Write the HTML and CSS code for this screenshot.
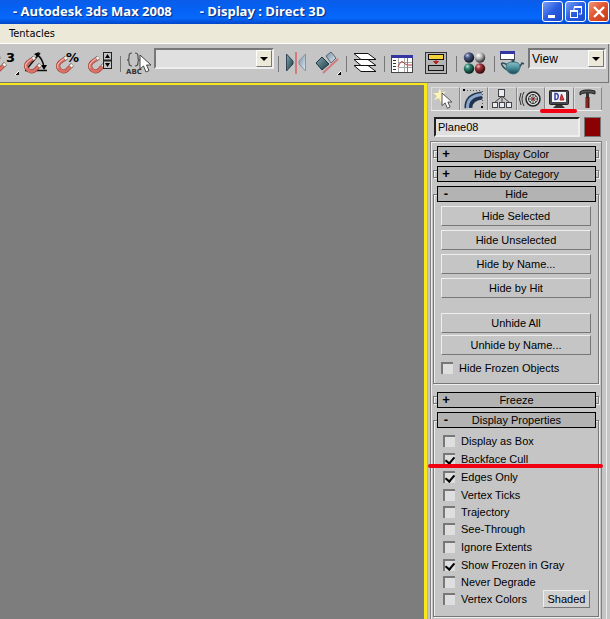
FILE: index.html
```html
<!DOCTYPE html>
<html lang="en">
<head>
<meta charset="utf-8">
<title>Autodesk 3ds Max 2008</title>
<link rel="stylesheet" href="styles.css">
</head>
<body>
<svg class="defs" aria-hidden="true">
  <defs>
    <linearGradient id="teal" x1="0" y1="0" x2="1" y2="1"><stop offset="0" stop-color="#86aab0"/><stop offset="1" stop-color="#173a44"/></linearGradient>
    <linearGradient id="ice" x1="0" y1="0" x2="1" y2="1"><stop offset="0" stop-color="#7890a4"/><stop offset="1" stop-color="#dfe9f1"/></linearGradient>
    <radialGradient id="ballBlue" cx=".35" cy=".3" r=".7"><stop offset="0" stop-color="#c3cce4"/><stop offset=".35" stop-color="#4b5a80"/><stop offset="1" stop-color="#10152c"/></radialGradient>
    <radialGradient id="ballGray" cx=".35" cy=".3" r=".7"><stop offset="0" stop-color="#fff"/><stop offset=".45" stop-color="#bbb"/><stop offset="1" stop-color="#333"/></radialGradient>
    <radialGradient id="ballGreen" cx=".35" cy=".3" r=".7"><stop offset="0" stop-color="#c0e8dc"/><stop offset=".35" stop-color="#2f8270"/><stop offset="1" stop-color="#06251e"/></radialGradient>
    <radialGradient id="ballRed" cx=".35" cy=".3" r=".7"><stop offset="0" stop-color="#f2c0c0"/><stop offset=".35" stop-color="#a03538"/><stop offset="1" stop-color="#350a0c"/></radialGradient>
    <linearGradient id="pot" x1="0" y1="0" x2="0" y2="1"><stop offset="0" stop-color="#8fc3cc"/><stop offset=".5" stop-color="#4a8d9b"/><stop offset="1" stop-color="#17444f"/></linearGradient>
    <g id="magnet" fill="none">
      <path d="M10 9 4 13Q0 17 4 21Q8 24 11 21L16 16" stroke="#8a3a34" stroke-width="4"/>
      <path d="M10 9 4 13Q0 17 4 21Q8 24 11 21L16 16" stroke="#dd7066" stroke-width="3"/>
      <path d="M9 9 4 12.500Q0 16 2 19" stroke="#f7c0b6" stroke-width="1"/>
      <path d="M8.500 10 11 8.300M14.300 17.700 16.500 15.500" stroke="#666" stroke-width="4"/>
      <path d="M8.700 9.900 10.800 8.400M14.500 17.500 16.300 15.700" stroke="#f8f4e6" stroke-width="3"/>
    </g>
    <path id="cursor" d="M0 0V14L3.500 11 6 17 9 15.500 6.500 10H11Z" fill="#fff" stroke="#444" stroke-width="1"/>
    <path id="down" d="M0 0H8L4 4Z"/>
  </defs>
</svg>

<header class="titlebar">
  <h1 class="title"><span>- Autodesk 3ds Max 2008</span><span>- Display : Direct 3D</span></h1>
  <div class="window-buttons">
    <button class="window-button" aria-label="Minimize"><svg width="20" height="20"><path d="M5 14.500H12" stroke="#fff" stroke-width="3"/></svg></button>
    <button class="window-button" aria-label="Restore"><svg width="20" height="20" fill="none" stroke="#fff"><path d="M8 8V5.500H15.500V12H13" /><path d="M8 5H16" stroke-width="2"/><rect x="4.500" y="9.500" width="7" height="6"/><path d="M4 9H12" stroke-width="2"/></svg></button>
    <button class="window-button close" aria-label="Close"><svg width="20" height="20"><path d="M5 5 15 15M15 5 5 15" stroke="#fff" stroke-width="2.400"/></svg></button>
  </div>
</header>

<nav class="menubar"><a class="menu-item" href="#">Tentacles</a></nav>

<div class="toolbar">
  <button class="tool first" aria-label="3D snap"><svg width="20" height="28"><use href="#magnet" x="-11" y="0"/><text x="6" y="14" class="glyph">3</text><path d="M19 23V27H15Z" fill="#111"/><path d="M19 23 15 27" stroke="#fff"/></svg></button>
  <button class="tool" aria-label="Angle snap"><svg width="28" height="28"><path d="M3 22.500H25M4 22 18 5" stroke="#111" stroke-width="1.500" fill="none"/><path d="M14 6Q21 10 22 20" fill="none" stroke="#111" stroke-width="1.500"/><path d="M12 6 17 4 16 9ZM19 17H25L22 22Z"/><use href="#magnet" x="2" y="1"/></svg></button>
  <button class="tool" aria-label="Percent snap"><svg width="28" height="28"><use href="#magnet" x="2" y="1"/><text x="12" y="14" class="glyph">%</text></svg></button>
  <button class="tool" aria-label="Spinner snap"><svg width="28" height="28"><use href="#magnet" x="2" y="1"/><rect x="17.500" y="4.500" width="8" height="16" fill="#c5c5c5" stroke="#222"/><path d="M17 12.500H26" stroke="#222" stroke-width="2"/><path d="M19 10 21.500 6 24 10ZM19 15 21.500 19 24 15Z"/></svg></button>
  <span class="divider"></span>
  <button class="tool slim" aria-label="Edit named selections"><svg width="28" height="28"><path d="M7 5Q4 5 4 8V10Q4 12 2 12Q4 12 4 14V15Q4 18 7 18M10 5Q13 5 13 8V10Q13 12 15 12Q13 12 13 14V15Q13 18 10 18" fill="none" stroke="#555" stroke-width="1.200"/><text x="1" y="26" class="tiny">ABC</text><use href="#cursor" x="15" y="7"/></svg></button>
  <span class="combo sets"><select aria-label="Named selection sets"><option></option></select><svg class="arrow" width="16" height="16"><use href="#down" x="3" y="6"/></svg></span>
  <span class="divider"></span>
  <button class="tool slim" aria-label="Mirror"><svg width="28" height="28"><path d="M3.500 6 10 13V16L3.500 23Z" fill="url(#teal)" stroke="#345"/><path d="M22.500 6 16 13V16L22.500 23Z" fill="url(#ice)" stroke="#8295a5"/><path d="M13 4V26" stroke="#d27b7e" stroke-width="2"/></svg></button>
  <button class="tool slim" aria-label="Align"><svg width="28" height="28"><path d="M3 15 9 9 16 16 9 22Z" fill="url(#teal)" stroke="#234"/><path d="M13 8 18 4 23 10 18 15Z" fill="url(#ice)" stroke="#567"/><path d="M10 25 25 11" stroke="#d27b7e" stroke-width="2"/><path d="M28 23V27H24Z"/><path d="M28 23 24 27" stroke="#fff"/></svg></button>
  <span class="divider"></span>
  <button class="tool slim" aria-label="Layer manager"><svg width="28" height="28" fill="#fff" stroke="#111" stroke-width="1"><path d="M3 17.500H17L25 23.500H10Z"/><path d="M3 11.500H17L25 17.500H10Z"/><path d="M3 5.500H17L25 11.500H10Z"/></svg></button>
  <span class="divider"></span>
  <button class="tool" aria-label="Curve editor"><svg width="28" height="28"><rect x="1.500" y="7.500" width="21" height="17" fill="#fff" stroke="#444"/><path d="M1 8.500H23" stroke="#3436a4" stroke-width="3"/><path d="M8.500 10V24M14.500 10V24M8 14.500H22M8 19.500H22" stroke="#aaa"/><path d="M3 12.500H6M3 15.500H6M3 18.500H6M3 21.500H6" stroke="#333"/><path d="M8 19Q11 12 13 14T17 17H22" fill="none" stroke="#b43b3b"/><path d="M17.500 10V24" stroke="#51a051"/></svg></button>
  <button class="tool" aria-label="Schematic view"><svg width="28" height="28"><rect x="3.500" y="4.500" width="21" height="21" fill="#b5b5b5" stroke="#333"/><rect x="6.500" y="6.500" width="15" height="5" fill="#f5d33b" stroke="#111"/><rect x="6.500" y="17.500" width="15" height="5" fill="#aaa" stroke="#111"/><path d="M14 12V14M11.500 13.500H16.500L14 16Z" stroke="#b22222" fill="#b22222"/></svg></button>
  <span class="divider"></span>
  <button class="tool slim" aria-label="Material editor"><svg width="28" height="28"><circle cx="8" cy="9.500" r="5.200" fill="url(#ballBlue)"/><circle cx="19" cy="9.500" r="5.200" fill="url(#ballGray)"/><circle cx="8" cy="20.500" r="5.200" fill="url(#ballGreen)"/><circle cx="19" cy="20.500" r="5.200" fill="url(#ballRed)"/></svg></button>
  <span class="divider"></span>
  <button class="tool slim" aria-label="Render scene"><svg width="28" height="28"><path d="M9 17Q1 13 3 17Q5 21 9 22M20 20 23 15 25 16" fill="none" stroke="#27525c" stroke-width="1.500"/><path d="M7 18Q8 14 14 14Q21 14 21 19Q20 26 14 26Q7 25 7 18Z" fill="url(#pot)" stroke="#3b7480"/><path d="M14 14V12" stroke="#27525c" stroke-width="3"/><rect x="1.500" y="3.500" width="14" height="8" fill="#fff" stroke="#445"/><path d="M1 4.500H16" stroke="#3436a4" stroke-width="3"/></svg></button>
  <span class="combo view"><select aria-label="Render type"><option>View</option></select><svg class="arrow" width="16" height="16"><use href="#down" x="3" y="6"/></svg></span>
</div>

<main class="workspace">
  <section class="viewport" aria-label="Viewport"></section>
  <aside class="panel">
    <div class="tabs">
      <button class="tab" aria-label="Create"><svg width="24" height="22"><path d="M7 0 8 5 13 3 9 8 14 10 9 11 8 15 6 10 1 12 4 8 0 5 5 5Z" fill="#fff4b8"/><g transform="translate(9 5) scale(.9)"><use href="#cursor"/></g></svg></button>
      <button class="tab" aria-label="Modify"><svg width="24" height="22" fill="none"><path d="M6.500 20Q6 9 20 7.500" stroke="#1f3350" stroke-width="8"/><path d="M5.500 20Q5 8 20 6.500" stroke="#8ba7ca" stroke-width="3"/><path d="M2 2.500H19M20.500 3V20" stroke="#555" stroke-dasharray="1 2"/><path d="M1 1H3V3H1ZM19 18H21V20H19Z" fill="#000"/></svg></button>
      <button class="tab" aria-label="Hierarchy"><svg width="24" height="22" fill="#e8edf5" stroke="#444"><path d="M12 8V15M11 9 4 15M13 9 20 15" fill="none"/><rect x="8.500" y="1.500" width="6" height="7"/><rect x="2.500" y="14.500" width="5" height="5"/><rect x="9.500" y="14.500" width="5" height="5"/><rect x="16.500" y="14.500" width="5" height="5"/></svg></button>
      <button class="tab" aria-label="Motion"><svg width="24" height="22" fill="none" stroke="#333"><circle cx="14" cy="11" r="7" fill="#ddd" stroke="#222" stroke-width="1.500"/><circle cx="14" cy="11" r="4.500"/><path d="M14 6V16M9 11H19M11 8 17 14M17 8 11 14" stroke-width=".8"/><circle cx="14" cy="11" r="1" fill="#a22" stroke="#a22"/><path d="M5 4Q1 11 5 18M2 5Q-1 11 2 17"/></svg></button>
      <button class="tab current" aria-label="Display"><svg width="24" height="22"><rect x="2.500" y="2.500" width="19" height="14" rx="1" fill="#46474c" stroke="#222"/><rect x="5" y="4" width="14" height="10" fill="#f3f3fa"/><path d="M8 5.500H9Q12 6 11 10Q10 12 8 11.500Z" fill="none" stroke="#3540b0" stroke-width="1.500"/><path d="M13 12 14.500 6 17 12Z" fill="#d44" stroke="#a22"/><path d="M9 17H15L18 20H6Z" fill="#333"/></svg></button>
      <button class="tab" aria-label="Utilities"><svg width="24" height="22"><path d="M4 7V4Q6 2 10 2H14L19 3V6L15 5H9Q6 5 4 7Z" fill="#555" stroke="#222"/><path d="M11.500 5V10" stroke="#333" stroke-width="3"/><path d="M11.500 9V20" stroke="#591714" stroke-width="4"/><path d="M11 10V20" stroke="#b33831" stroke-width="1"/></svg></button>
    </div>
    <span class="mark mark-tab"></span>

    <div class="object">
      <input class="object-name" type="text" value="Plane08" aria-label="Object name">
      <button class="swatch" aria-label="Object color"></button>
    </div>

    <div class="rollouts">
      <section class="rollout closed"><button class="rollout-head"><b>+</b><span>Display Color</span></button></section>
      <section class="rollout closed"><button class="rollout-head"><b>+</b><span>Hide by Category</span></button></section>
      <section class="rollout hide">
        <button class="rollout-head"><b>-</b><span>Hide</span></button>
        <div class="actions">
          <button class="action">Hide Selected</button>
          <button class="action">Hide Unselected</button>
          <button class="action">Hide by Name...</button>
          <button class="action">Hide by Hit</button>
        </div>
        <div class="actions unhide">
          <button class="action">Unhide All</button>
          <button class="action">Unhide by Name...</button>
        </div>
        <label class="check frozen"><input type="checkbox">Hide Frozen Objects</label>
      </section>
      <section class="rollout closed"><button class="rollout-head"><b>+</b><span>Freeze</span></button></section>
      <section class="rollout">
        <button class="rollout-head"><b>-</b><span>Display Properties</span></button>
        <div class="properties">
          <label class="check"><input type="checkbox">Display as Box</label>
          <label class="check"><input type="checkbox" checked>Backface Cull</label>
          <label class="check"><input type="checkbox" checked>Edges Only</label>
          <label class="check"><input type="checkbox">Vertex Ticks</label>
          <label class="check tight"><input type="checkbox">Trajectory</label>
          <label class="check"><input type="checkbox">See-Through</label>
          <label class="check"><input type="checkbox">Ignore Extents</label>
          <label class="check"><input type="checkbox" checked>Show Frozen in Gray</label>
          <label class="check tight"><input type="checkbox">Never Degrade</label>
          <div class="row"><label class="check"><input type="checkbox">Vertex Colors</label><button class="shaded">Shaded</button></div>
          <span class="mark mark-row"></span>
        </div>
      </section>
    </div>
  </aside>
</main>
</body>
</html>
```
FILE: styles.css
```css
* { box-sizing: border-box; }

body {
  margin: 0;
  min-height: 100vh;
  display: flex;
  flex-direction: column;
  background: #c5c5c5;
  color: #000;
  font: 11px/16px "Liberation Sans", Arial, sans-serif;
}

button, input, select {
  margin: 0;
  padding: 0;
  border: 0;
  border-radius: 0;
  background: none;
  color: inherit;
  font: inherit;
}

svg { display: block; }
.defs { position: absolute; width: 0; height: 0; }

.titlebar {
  display: flex;
  align-items: center;
  justify-content: space-between;
  height: 24px;
  padding: 0 1px 2px 13px;
  background: linear-gradient(#0a5ce8, #0562f5 40%, #0668fc 75%, #0446c8);
}
.title {
  display: flex;
  gap: 28px;
  margin: 0;
  color: #fff;
  font: bold 13px/16px "Open Sans", sans-serif;
  text-shadow: 1px 1px 1px #0a2a80;
}
.window-buttons { display: flex; gap: 2px; }
.window-button {
  width: 21px;
  height: 21px;
  border: 1px solid #fff;
  border-radius: 3px;
  background: linear-gradient(135deg, #7a9ff5, #2a5ce0 50%, #1a49cc);
}
.window-button.close { background: linear-gradient(135deg, #f0937a, #e0502c 50%, #c43a16); }

.menubar {
  height: 20px;
  padding: 1px 9px;
  border-bottom: 1px solid #fff;
  background: #ece9d8;
}
.menu-item { color: #000; font: 11px/16px "DejaVu Sans Condensed", "Noto Sans", sans-serif; text-decoration: none; }

.toolbar {
  display: flex;
  height: 39px;
  margin-right: 1px;
  padding-top: 4px;
  border-right: 1px solid #777;
  border-bottom: 1px solid #777;
}
.tool { display: flex; flex: none; justify-content: center; width: 32px; height: 28px; }
.tool.first { width: 20px; }
.tool.slim { width: 30px; }
.glyph { font: bold 13px "DejaVu Sans", sans-serif; }
.tiny { font: bold 7px "DejaVu Sans", sans-serif; fill: #333; }
.divider { flex: none; width: 8px; height: 16px; margin-top: 8px; }
.divider::before { content: ""; display: block; width: 1px; height: 16px; margin: 0 auto; background: #777; }

.combo {
  position: relative;
  height: 21px;
  border: 2px solid;
  border-color: #777 #eee #eee #777;
  background: #e0e0e0;
}
.combo.sets { flex: none; width: 120px; }
.combo.view { flex: none; width: 78px; }
.combo select { appearance: none; display: block; width: 100%; height: 17px; padding-left: 2px; font-size: 12px; }
.arrow {
  position: absolute;
  top: 0;
  right: 0;
  height: 17px;
  border: 1px solid;
  border-color: #fff #777 #777 #fff;
  background: #ece9d8;
  pointer-events: none;
}

.workspace { display: flex; flex: 1; }
.viewport {
  flex: 1;
  border: solid #f8e71c;
  border-width: 2px 3px 0 0;
  background: #7d7d7d;
}
.panel {
  position: relative;
  display: flex;
  flex: none;
  flex-direction: column;
  width: 183px;
  padding-top: 4px;
  border-left: 1px solid #aab4c8;
}

.tabs { display: flex; margin: 0 8px 0 3px; border-bottom: 1px solid #eee; }
.tab {
  display: flex;
  flex: 1;
  justify-content: center;
  height: 23px;
  border: solid;
  border-width: 1px 1px 0;
  border-color: #ddd #888 #888 #ddd;
}
.tab.current { background: #d4d4d4; }

.object { display: flex; gap: 4px; margin: 6px 9px 0 6px; }
.object-name {
  flex: 1;
  min-width: 0;
  height: 20px;
  padding: 0 2px;
  border: 2px solid;
  border-color: #222 #eee #eee #222;
  background: #e0e0e0;
}
.swatch { width: 17px; height: 20px; border: 1px solid #777; background: #8b0000; }

.rollouts {
  display: flex;
  flex: 1;
  flex-direction: column;
  gap: 4px;
  margin: 4px 8px 0 2px;
  padding: 4px 2px 1px 2px;
  border: solid #808080;
  border-width: 1px 1px 0;
  box-shadow: inset 1px 1px #eee, 4px 0 #c5c5c5, 5px 0 #eee;
}
.rollout { position: relative; display: flex; flex-direction: column; }
.rollout::before {
  content: "";
  position: absolute;
  inset: 8px 0 0;
  border: 1px solid #777;
  box-shadow: inset 1px 1px #eee, 1px 1px #eee;
  pointer-events: none;
}
.rollout.closed::before { inset: 4px 0; }
.rollout-head {
  position: relative;
  display: flex;
  height: 16px;
  margin: 0 3px 0 4px;
  border: 1px solid #000;
  background: #b3b3b3;
  line-height: 14px;
}
.rollout-head b { width: 16px; font-size: 13px; }
.rollout-head span { flex: 1; padding-right: 16px; }

.hide { margin-bottom: 4px; padding-bottom: 7px; }
.actions { display: flex; flex-direction: column; gap: 4px; margin: 4px 8px 0; }
.unhide { gap: 2px; margin-top: 15px; }
.action, .shaded { border: 1px solid; border-color: #eee #777 #777 #eee; }
.action { position: relative; height: 20px; line-height: 18px; }

.check { position: relative; display: flex; align-items: center; gap: 6px; height: 18px; }
.check.tight { height: 16px; }
.check.frozen { margin: 4px 8px 0; }
.check input {
  appearance: none;
  display: grid;
  place-items: center;
  width: 12px;
  height: 12px;
  border: solid #777;
  border-width: 2px 0 0 2px;
  background: #dedede;
}
.check input:checked::after {
  content: "";
  width: 4px;
  height: 7px;
  margin-bottom: 2px;
  border: solid #000;
  border-width: 0 2px 2px 0;
  transform: rotate(40deg);
}
.properties { position: relative; padding: 4px 9px 9px 10px; }
.row { display: flex; align-items: center; justify-content: space-between; height: 18px; }
.shaded { position: relative; width: 47px; height: 18px; background: #d0d0d0; line-height: 16px; }

.mark { position: absolute; height: 4px; border-radius: 2px; background: #f00010; }
.mark-tab { top: 26px; left: 112px; width: 37px; }
.mark-row { top: 36px; left: -5px; right: -4px; }
```
